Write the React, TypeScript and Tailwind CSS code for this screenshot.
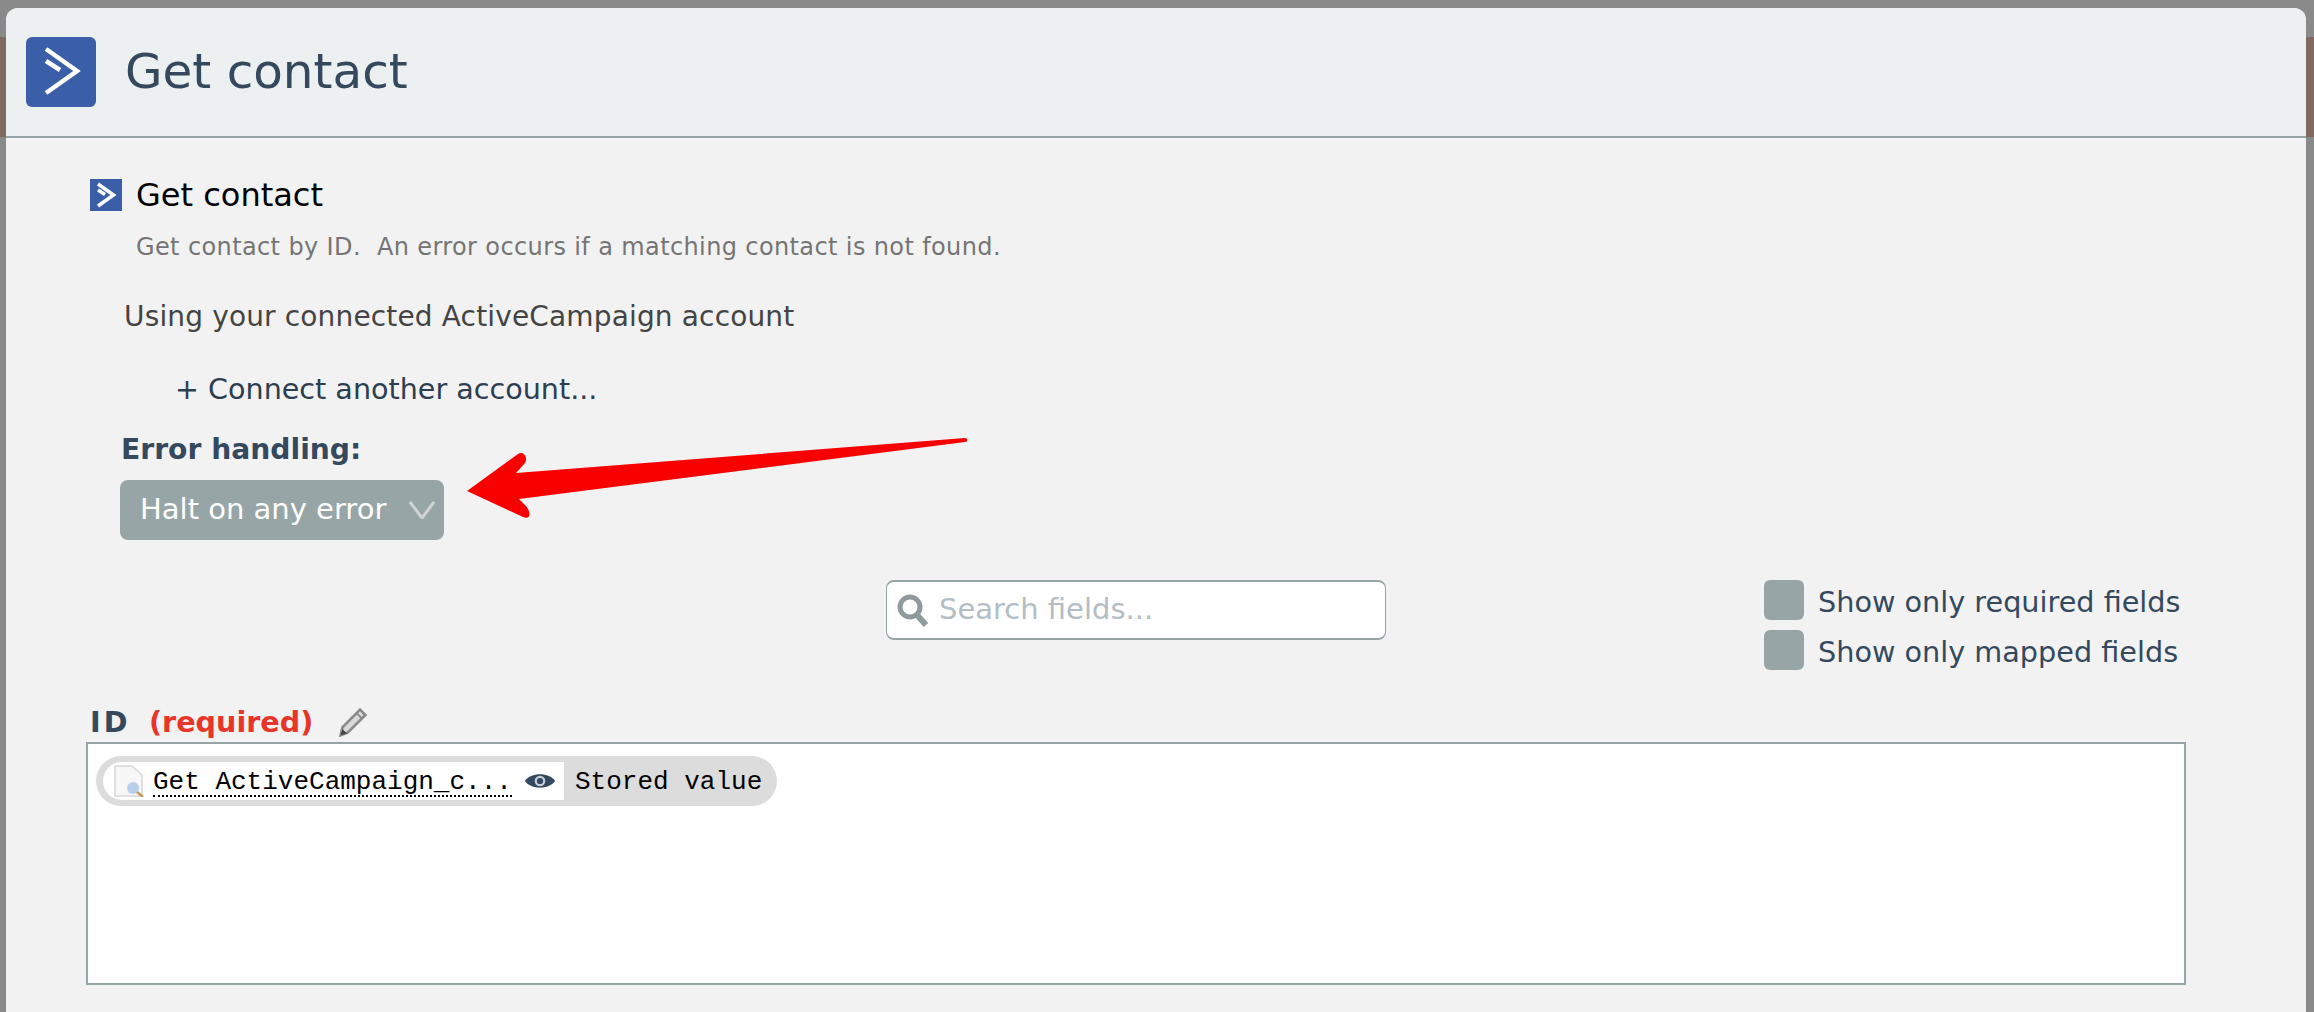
import React from "react"

const BrandIcon: React.FC<{ className: string; box: string; width: number }> = ({ className, box, width }) => (
  <svg viewBox={box} className={className}>
    <path d="M20 12 L51 34 L20 56" fill="none" stroke="#fff" strokeWidth={width} />
    <path d="M20 24 L34 33" fill="none" stroke="#fff" strokeWidth={width} />
  </svg>
)

const CheckRow: React.FC<{ label: string }> = ({ label }) => (
  <div className="flex h-[40px] items-start gap-[14px]">
    <div className="h-[40px] w-[40px] shrink-0 rounded-[6px] bg-[#98a5a6]" />
    <span className="mt-[4px] text-[28.7px] leading-[36px] text-[#34495e]">{label}</span>
  </div>
)

const App: React.FC = () => {
  return (
    <div className="relative h-[1012px] w-full overflow-hidden bg-[#8a8a8a] font-['DejaVu_Sans',sans-serif]">
      <div className="mt-[37px] h-[100px] bg-[#806a60]" />

      <div className="absolute left-[6px] top-[8px] flex h-[1010px] w-[2300px] flex-col rounded-t-[12px] bg-[#f2f2f2]">
        <div className="flex h-[130px] items-center gap-[30px] rounded-t-[12px] border-b-2 border-[#95a5a6] bg-[#ecf0f1] pl-[20px]">
          <div className="h-[70px] w-[70px] rounded-[6px] bg-[#3a5ea8]">
            <BrandIcon className="h-[70px] w-[70px]" box="0 0 70 70" width={4.5} />
          </div>
          <h1 className="mt-[-2px] ml-[-1px] text-[48.4px] text-[#34495e]">Get contact</h1>
        </div>

        <div className="relative flex flex-col pl-[80px] pr-[120px]">
          <div className="ml-[4px] mt-[39px] flex items-center gap-[14px]">
            <div className="h-[32px] w-[32px] bg-[#3a5ea8]">
              <BrandIcon className="h-[32px] w-[32px]" box="4 2 64 64" width={7} />
            </div>
            <span className="text-[32px] leading-[36px] text-black">Get contact</span>
          </div>
          <p className="ml-[50px] mt-[19px] whitespace-pre text-[24px] leading-[30px] tracking-[0.38px] text-[#757575]">
            Get contact by ID.  An error occurs if a matching contact is not found.
          </p>
          <p className="ml-[38px] mt-[37px] text-[28px] leading-[36px] tracking-[0.15px] text-[#444]">
            Using your connected ActiveCampaign account
          </p>
          <p className="ml-[89px] mt-[36px] text-[28.6px] leading-[36px] text-[#2c3e50]">+ Connect another account...</p>
          <p className="ml-[35px] mt-[26px] text-[28.2px] font-bold leading-[34px] text-[#34495e]">Error handling:</p>
          <div className="ml-[34px] mt-[13px] flex h-[60px] w-[324px] items-center justify-between rounded-[8px] bg-[#98a5a6] pl-[20px] pr-[9px] text-[29px] text-white">
            <span>Halt on any error</span>
            <svg viewBox="0 0 26 18" className="h-[18px] w-[26px]">
              <path d="M1 1 L13 17 L25 1" fill="none" stroke="#cfd3d4" strokeWidth="3" />
            </svg>
          </div>

          <div className="mt-[40px] flex items-start">
            <div className="ml-[800px] flex h-[60px] w-[500px] items-center gap-[9px] rounded-[8px] border border-b-2 border-t-2 border-[#95a5a6] bg-white pl-[10px]">
              <svg viewBox="0 0 33 33" className="h-[33px] w-[33px]">
                <circle cx="13" cy="13" r="10" fill="none" stroke="#8f9a9c" strokeWidth="5" />
                <path d="M20 21 L29 31" stroke="#8f9a9c" strokeWidth="6" />
              </svg>
              <span className="text-[29px] text-[#b4bcc4]">Search fields...</span>
            </div>
            <div className="ml-[378px] flex flex-col gap-[10px]">
              <CheckRow label="Show only required fields" />
              <CheckRow label="Show only mapped fields" />
            </div>
          </div>

          <div className="ml-[4px] mb-[4px] mt-[34px] flex h-[34px] items-center text-[28.6px] font-bold">
            <span className="mt-[2px] w-[59px] tracking-[3px] text-[#34495e]">ID</span>
            <span className="mt-[2px] text-[#e8352a]">(required)</span>
            <svg viewBox="0 0 34 34" className="ml-[24px] mt-[2px] h-[30px] w-[32px]">
              <path d="M25 3 L31 9 L11 29 L3 32 L5 23 Z" fill="#d9d9d9" stroke="#8a8a8a" strokeWidth="3" />
              <path d="M21 7 L27 13" stroke="#8a8a8a" strokeWidth="2" />
              <path d="M3 32 L5 25 L10 30 Z" fill="#444" />
            </svg>
          </div>
          <div className="h-[243px] w-[2100px] border-2 border-[#95a5a6] bg-white pl-[8px] pt-[12px]">
            <div className="flex h-[50px] w-[681px] items-center rounded-[25px] bg-[#dcdcdc] pl-[7px] font-['Liberation_Mono',monospace] text-[26px] text-black">
              <div className="flex h-[38px] w-[461px] items-center rounded-l-[19px] bg-white pl-[11px]">
                <svg viewBox="0 0 30 32" className="h-[32px] w-[30px] shrink-0">
                  <path d="M1 1 H18 L28 10 V31 H1 Z" fill="#f7f7f7" stroke="#d8d8d8" strokeWidth="1.5" />
                  <circle cx="19" cy="23" r="6" fill="#b9d0ec" />
                  <path d="M23 27 L29 32" stroke="#c79a5c" strokeWidth="2.5" />
                </svg>
                <span className="ml-[9px] mt-[4px] border-b-2 border-dotted border-black leading-[26px]">Get ActiveCampaign_c...</span>
                <svg viewBox="0 0 36 22" className="ml-[12px] h-[22px] w-[32px] shrink-0">
                  <path d="M1 11 C8 1 28 1 35 11 C28 21 8 21 1 11 Z" fill="#34495e" />
                  <circle cx="18" cy="11" r="6" fill="#c5cdd6" />
                  <circle cx="18" cy="11" r="3.5" fill="#34495e" />
                </svg>
              </div>
              <span className="ml-[11px] mt-[2px]">Stored value</span>
            </div>
          </div>

          <svg viewBox="0 0 520 100" className="absolute left-[454px] top-[292px] h-[100px] w-[520px]">
            <path
              d="M505 8 C508 8 508 12 505 12 L59 69 L66 76 C72 84 70 90 63 87 L7 61 L58 24 C64 20 68 28 65 33 L56 43 Z"
              fill="#f80000"
            />
          </svg>
        </div>
      </div>
    </div>
  )
}

export default App
